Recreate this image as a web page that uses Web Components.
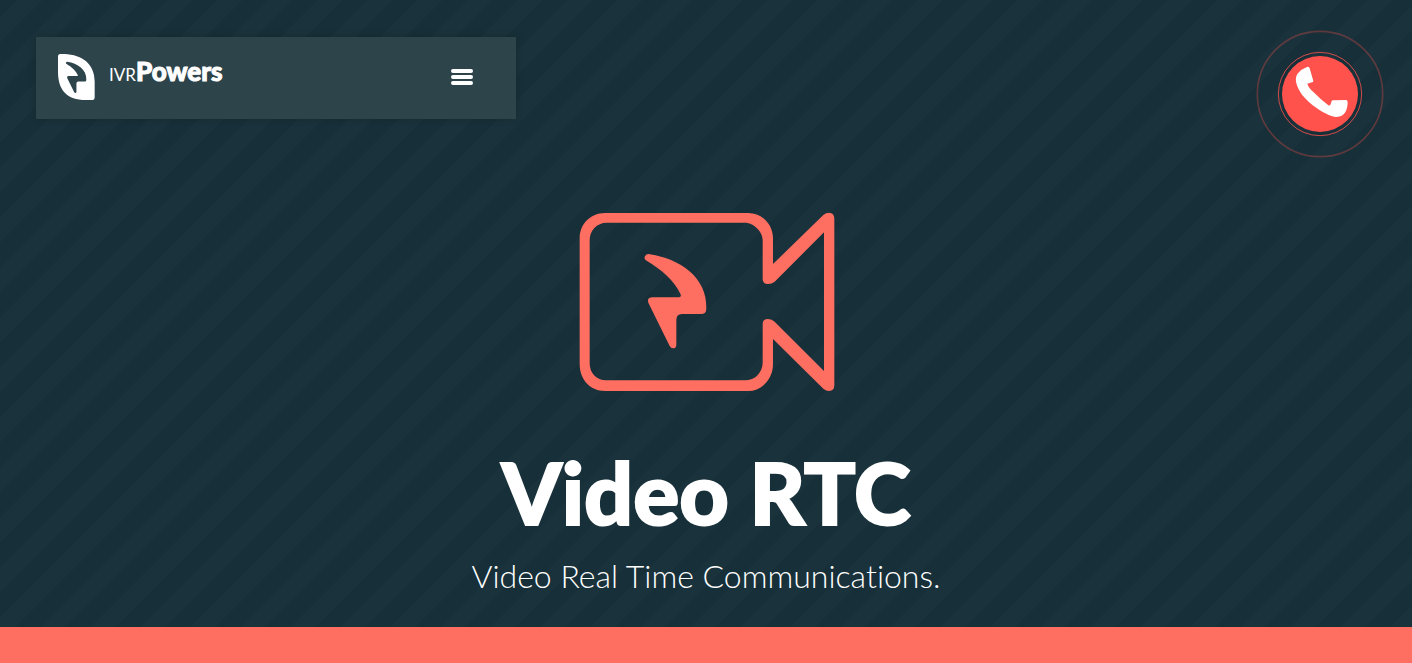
<!DOCTYPE html>
<html lang="en">
<head>
<meta charset="utf-8">
<meta name="viewport" content="width=device-width, initial-scale=1">
<title>Video RTC</title>
<style>
  body { margin: 0; background: #172f38; color: #fff; font-family: Lato, "Open Sans", sans-serif; font-variant-ligatures: none; }
</style>
</head>
<body>
<rtc-page>
  <rtc-nav slot="nav"></rtc-nav>
  <rtc-call slot="call"></rtc-call>
  <rtc-hero>
    <span slot="title">Video RTC</span>
    <span slot="lead">Video Real Time Communications.</span>
  </rtc-hero>
</rtc-page>
<script>
const BOLT = 'M236 162C330 176 412 232 409 325Q409 342 396 342H336Q319 342 319 360V434Q319 445 309 445Q303 445 299 438L235 308Q230 293 246 292H326Q336 290 331 281C315 245 275 208 230 182Q222 178 224 170Q227 162 236 162Z';

function define(name, html) {
  customElements.define(name, class extends HTMLElement {
    constructor() {
      super();
      this.attachShadow({ mode: 'open' }).innerHTML = html;
    }
  });
}

define('rtc-page', `
<style>
  :host { display: flex; flex-direction: column; min-height: 100vh; }
  .stage { padding-bottom: 32px;
    background: linear-gradient(135deg, #172f38 18%, #1a323b 18% 43%, #172f38 43% 68%, #1a323b 68% 93%, #172f38 93%) 0 0 / 50px 50px; }
  header { display: flex; justify-content: space-between; align-items: flex-start; padding: 30px 28px 0 36px; }
  footer { flex: 1; min-height: 36px; background: #ff6f61; }
</style>
<div class="stage">
  <header><slot name="nav"></slot><slot name="call"></slot></header>
  <main><slot></slot></main>
</div>
<footer></footer>`);

define('rtc-nav', `
<style>
  :host { display: block; width: 480px; max-width: 70%; margin-top: 7px; }
  nav { display: flex; justify-content: space-between; align-items: center; height: 82px; box-sizing: border-box;
    padding: 0 43px 2px 22px; background: #2d444b; box-shadow: 0 0 8px rgba(0,0,0,.12); }
  a { display: flex; align-items: center; gap: 14px; color: #fff; text-decoration: none; }
  .name { display: flex; align-items: baseline; padding-bottom: 8px; line-height: 32px; }
  .thin { font-size: 17px; font-weight: 400; }
  .bold { font-size: 26px; font-weight: 900; -webkit-text-stroke: 1px #fff; }
  button { display: flex; flex-direction: column; gap: 2px; border: 0; padding: 0; background: none; cursor: pointer; }
  i { width: 22px; height: 4px; border-radius: 2px; background: #fff; }
</style>
<nav>
  <a href="#" aria-label="IVRPowers">
    <svg width="37" height="46" viewBox="85 72 111 138" aria-hidden="true">
      <path fill="#fff" d="M92 72C155 70 195 100 195 155V203Q195 210 188 210H168C112 210 85 180 85 125V80Q85 72 92 72Z"/>
      <path fill="#2d444b" transform="translate(35 42) scale(.33)" d="${BOLT}"/>
    </svg>
    <span class="name"><span class="thin">IVR</span><span class="bold">Powers</span></span>
  </a>
  <button type="button" aria-label="Menu"><i></i><i></i><i></i></button>
</nav>`);

define('rtc-call', `
<style>
  :host { display: block; }
  button { display: block; border: 0; padding: 0; background: none; border-radius: 50%; cursor: pointer; }
  svg { display: block; }
</style>
<button type="button" aria-label="Call">
  <svg width="128" height="128" viewBox="33 30 384 384" aria-hidden="true">
    <g fill="none" stroke="#ff524d">
      <circle cx="225" cy="222" r="188" stroke-width="5" opacity=".3"/>
      <circle cx="225" cy="222" r="125" stroke-width="3" opacity=".8"/>
    </g>
    <circle cx="225" cy="222" r="114" fill="#ff524d"/>
    <path fill="#fff" d="M186 141Q192 139 194 145L205 183Q205 187 201 187L187 191Q190 202 205 216Q228 239 250 256Q254 258 257 253L259 245Q260 241 265 241L303 240Q308 240 308 247C308 270 298 292 274 291C245 288 190 252 167 218C150 190 149 172 159 160Q169 147 186 141Z"/>
  </svg>
</button>`);

define('rtc-hero', `
<style>
  :host { display: flex; flex-direction: column; align-items: center; text-align: center; padding-top: 42px; }
  svg { display: block; width: 280px; height: 200px; margin-left: 8px; }
  h1 { margin: 40px 0 0; font-size: 86px; line-height: 104px; font-weight: 900; -webkit-text-stroke: 2px #fff; }
  p { margin: 12px 0 0; font-size: 32px; line-height: 39px; font-weight: 300; }
</style>
<svg viewBox="0 0 840 600" fill="#ff6f61" aria-hidden="true">
  <path fill-rule="evenodd" d="M105 39H535C575 39 609 72 609 115V192L760 45Q768 38 777 38Q793 38 793 56V556Q793 573 777 573Q768 573 760 566L609 417V492C609 538 575 573 535 573H105C62 573 29 540 29 492V115C29 72 62 39 105 39ZM110 68C80 68 59 92 59 120V490C59 520 80 541 108 541H525C555 541 578 517 578 488V372Q578 357 594 357Q606 357 614 365L762 513V97L614 245Q606 252 594 252Q578 252 578 237V120C578 94 550 68 525 68Z"/>
  <path d="${BOLT}"/>
</svg>
<h1><slot name="title"></slot></h1>
<p><slot name="lead"></slot></p>`);
</script>
</body>
</html>
